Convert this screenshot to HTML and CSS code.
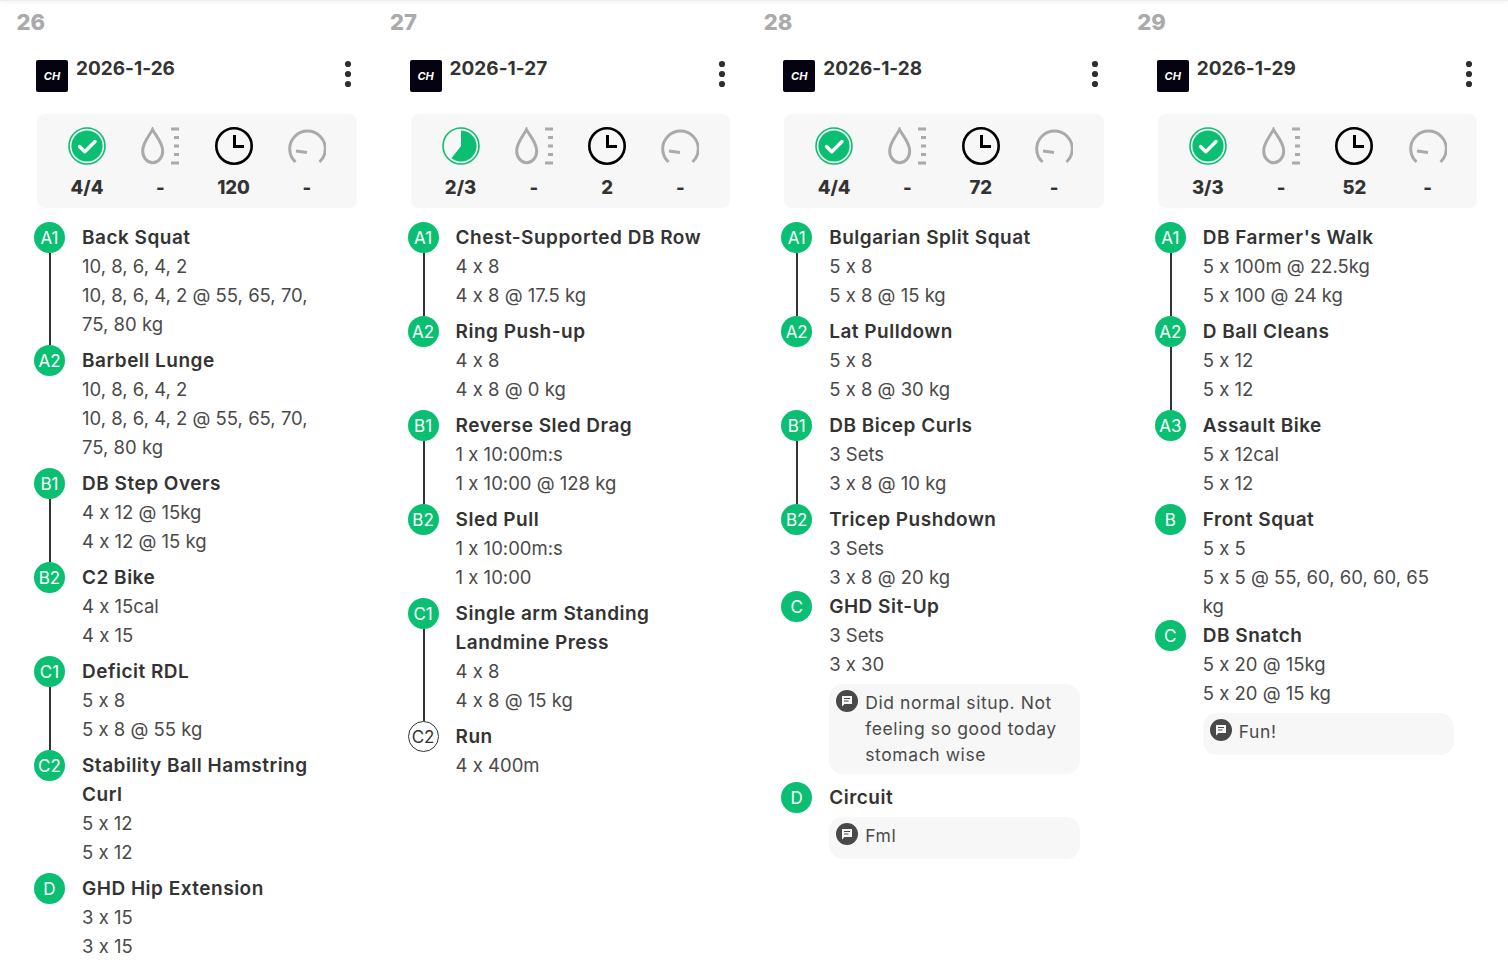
FILE: index.html
```html
<!DOCTYPE html>
<html lang="en">
<head>
<meta charset="utf-8">
<title>Training calendar</title>
<link rel="stylesheet" href="styles.css">
</head>
<body>
<svg class="defs" width="0" height="0" aria-hidden="true">
  <defs>
    <symbol id="i-check" viewBox="0 0 38 38">
      <circle cx="19" cy="19" r="18" fill="none" stroke="#0abf72" stroke-width="1.6"/>
      <circle cx="19" cy="19" r="15.6" fill="#0abf72"/>
      <path d="M11.5 19.5l5.3 5.2L27 14.500" fill="none" stroke="#fff" stroke-width="3.4" stroke-linecap="round" stroke-linejoin="round"/>
    </symbol>
    <symbol id="i-pie" viewBox="0 0 38 38">
      <circle cx="19" cy="19" r="18" fill="none" stroke="#0abf72" stroke-width="1.6"/>
      <path d="M19 3.400A15.600 15.600 0 1 1 9.400 31.300L19 19Z" fill="#0abf72"/>
    </symbol>
    <symbol id="i-drop" viewBox="0 0 38 38">
      <path d="M11.500 2.500C9 8 1.700 15 1.700 24a10 11.800 0 0 0 20 0C21.700 15 14 8 11.500 2.500Z" fill="none" stroke="#aaa" stroke-width="3"/>
      <path d="M30 2h8M33 10.500h5M33 19h5M33 27.500h5M30 36h8" stroke="#aaa" stroke-width="3"/>
    </symbol>
    <symbol id="i-clock" viewBox="0 0 38 38">
      <circle cx="19" cy="19" r="17.700" fill="none" stroke="#000" stroke-width="2.600"/>
      <path d="M19.500 8V19.500H29" fill="none" stroke="#000" stroke-width="3"/>
    </symbol>
    <symbol id="i-gauge" viewBox="0 0 38 38">
      <path d="M7.500 35A17.800 17.800 0 1 1 31.500 35" fill="none" stroke="#aaa" stroke-width="3"/>
      <path d="M8 24l11 1.500" fill="none" stroke="#aaa" stroke-width="3"/>
    </symbol>
    <symbol id="i-note" viewBox="0 0 22 22">
      <circle cx="11" cy="11" r="11" fill="#494949"/>
      <path d="M6 6h10v8h-7.500L6 16.500Z" fill="#f7f7f7"/>
      <path d="M8 8.500h6M8 11h4.500" stroke="#494949" stroke-width="1.200"/>
    </symbol>
    <symbol id="i-more" viewBox="0 0 8 28">
      <circle cx="4" cy="4" r="3.100" fill="#2f2f33"/>
      <circle cx="4" cy="14" r="3.100" fill="#2f2f33"/>
      <circle cx="4" cy="24" r="3.100" fill="#2f2f33"/>
    </symbol>
  </defs>
</svg>
<div class="topbar"></div>
<main class="week">

  <section class="day">
    <div class="daynum">26</div>
    <header class="head">
      <span class="logo">CH</span>
      <h2 class="date">2026-1-26</h2>
      <svg class="more"><use href="#i-more"/></svg>
    </header>
    <div class="stats">
      <div class="stat"><svg class="ico"><use href="#i-check"/></svg><b>4/4</b></div>
      <div class="stat"><svg class="ico"><use href="#i-drop"/></svg><b>-</b></div>
      <div class="stat"><svg class="ico"><use href="#i-clock"/></svg><b>120</b></div>
      <div class="stat"><svg class="ico"><use href="#i-gauge"/></svg><b>-</b></div>
    </div>
    <div class="list">
      <div class="row"><div class="rail"><span class="badge">A1</span><span class="line"></span></div><div class="body"><h3>Back Squat</h3><p>10, 8, 6, 4, 2</p><p>10, 8, 6, 4, 2 @ 55, 65, 70, 75, 80 kg</p></div></div>
      <div class="row"><div class="rail"><span class="badge">A2</span></div><div class="body"><h3>Barbell Lunge</h3><p>10, 8, 6, 4, 2</p><p>10, 8, 6, 4, 2 @ 55, 65, 70, 75, 80 kg</p></div></div>
      <div class="row"><div class="rail"><span class="badge">B1</span><span class="line"></span></div><div class="body"><h3>DB Step Overs</h3><p>4 x 12 @ 15kg</p><p>4 x 12 @ 15 kg</p></div></div>
      <div class="row"><div class="rail"><span class="badge">B2</span></div><div class="body"><h3>C2 Bike</h3><p>4 x 15cal</p><p>4 x 15</p></div></div>
      <div class="row"><div class="rail"><span class="badge">C1</span><span class="line"></span></div><div class="body"><h3>Deficit RDL</h3><p>5 x 8</p><p>5 x 8 @ 55 kg</p></div></div>
      <div class="row"><div class="rail"><span class="badge">C2</span></div><div class="body"><h3>Stability Ball Hamstring Curl</h3><p>5 x 12</p><p>5 x 12</p></div></div>
      <div class="row"><div class="rail"><span class="badge">D</span></div><div class="body"><h3>GHD Hip Extension</h3><p>3 x 15</p><p>3 x 15</p></div></div>
    </div>
  </section>

  <section class="day">
    <div class="daynum">27</div>
    <header class="head">
      <span class="logo">CH</span>
      <h2 class="date">2026-1-27</h2>
      <svg class="more"><use href="#i-more"/></svg>
    </header>
    <div class="stats">
      <div class="stat"><svg class="ico"><use href="#i-pie"/></svg><b>2/3</b></div>
      <div class="stat"><svg class="ico"><use href="#i-drop"/></svg><b>-</b></div>
      <div class="stat"><svg class="ico"><use href="#i-clock"/></svg><b>2</b></div>
      <div class="stat"><svg class="ico"><use href="#i-gauge"/></svg><b>-</b></div>
    </div>
    <div class="list">
      <div class="row"><div class="rail"><span class="badge">A1</span><span class="line"></span></div><div class="body"><h3>Chest-Supported DB Row</h3><p>4 x 8</p><p>4 x 8 @ 17.5 kg</p></div></div>
      <div class="row"><div class="rail"><span class="badge">A2</span></div><div class="body"><h3>Ring Push-up</h3><p>4 x 8</p><p>4 x 8 @ 0 kg</p></div></div>
      <div class="row"><div class="rail"><span class="badge">B1</span><span class="line"></span></div><div class="body"><h3>Reverse Sled Drag</h3><p>1 x 10:00m:s</p><p>1 x 10:00 @ 128 kg</p></div></div>
      <div class="row"><div class="rail"><span class="badge">B2</span></div><div class="body"><h3>Sled Pull</h3><p>1 x 10:00m:s</p><p>1 x 10:00</p></div></div>
      <div class="row"><div class="rail"><span class="badge">C1</span><span class="line"></span></div><div class="body"><h3>Single arm Standing Landmine Press</h3><p>4 x 8</p><p>4 x 8 @ 15 kg</p></div></div>
      <div class="row"><div class="rail"><span class="badge badge-open">C2</span></div><div class="body"><h3>Run</h3><p>4 x 400m</p></div></div>
    </div>
  </section>

  <section class="day">
    <div class="daynum">28</div>
    <header class="head">
      <span class="logo">CH</span>
      <h2 class="date">2026-1-28</h2>
      <svg class="more"><use href="#i-more"/></svg>
    </header>
    <div class="stats">
      <div class="stat"><svg class="ico"><use href="#i-check"/></svg><b>4/4</b></div>
      <div class="stat"><svg class="ico"><use href="#i-drop"/></svg><b>-</b></div>
      <div class="stat"><svg class="ico"><use href="#i-clock"/></svg><b>72</b></div>
      <div class="stat"><svg class="ico"><use href="#i-gauge"/></svg><b>-</b></div>
    </div>
    <div class="list">
      <div class="row"><div class="rail"><span class="badge">A1</span><span class="line"></span></div><div class="body"><h3>Bulgarian Split Squat</h3><p>5 x 8</p><p>5 x 8 @ 15 kg</p></div></div>
      <div class="row"><div class="rail"><span class="badge">A2</span></div><div class="body"><h3>Lat Pulldown</h3><p>5 x 8</p><p>5 x 8 @ 30 kg</p></div></div>
      <div class="row"><div class="rail"><span class="badge">B1</span><span class="line"></span></div><div class="body"><h3>DB Bicep Curls</h3><p>3 Sets</p><p>3 x 8 @ 10 kg</p></div></div>
      <div class="row row-tight"><div class="rail"><span class="badge">B2</span></div><div class="body"><h3>Tricep Pushdown</h3><p>3 Sets</p><p>3 x 8 @ 20 kg</p></div></div>
      <div class="row row-note"><div class="rail"><span class="badge">C</span></div><div class="body"><h3>GHD Sit-Up</h3><p>3 Sets</p><p>3 x 30</p><div class="note"><svg class="note-ico"><use href="#i-note"/></svg><span>Did normal situp. Not feeling so good today stomach wise</span></div></div></div>
      <div class="row row-note"><div class="rail"><span class="badge">D</span></div><div class="body"><h3>Circuit</h3><div class="note"><svg class="note-ico"><use href="#i-note"/></svg><span>Fml</span></div></div></div>
    </div>
  </section>

  <section class="day">
    <div class="daynum">29</div>
    <header class="head">
      <span class="logo">CH</span>
      <h2 class="date">2026-1-29</h2>
      <svg class="more"><use href="#i-more"/></svg>
    </header>
    <div class="stats">
      <div class="stat"><svg class="ico"><use href="#i-check"/></svg><b>3/3</b></div>
      <div class="stat"><svg class="ico"><use href="#i-drop"/></svg><b>-</b></div>
      <div class="stat"><svg class="ico"><use href="#i-clock"/></svg><b>52</b></div>
      <div class="stat"><svg class="ico"><use href="#i-gauge"/></svg><b>-</b></div>
    </div>
    <div class="list">
      <div class="row"><div class="rail"><span class="badge">A1</span><span class="line"></span></div><div class="body"><h3>DB Farmer's Walk</h3><p>5 x 100m @ 22.5kg</p><p>5 x 100 @ 24 kg</p></div></div>
      <div class="row"><div class="rail"><span class="badge">A2</span><span class="line"></span></div><div class="body"><h3>D Ball Cleans</h3><p>5 x 12</p><p>5 x 12</p></div></div>
      <div class="row"><div class="rail"><span class="badge">A3</span></div><div class="body"><h3>Assault Bike</h3><p>5 x 12cal</p><p>5 x 12</p></div></div>
      <div class="row row-tight"><div class="rail"><span class="badge">B</span></div><div class="body"><h3>Front Squat</h3><p>5 x 5</p><p>5 x 5 @ 55, 60, 60, 60, 65 kg</p></div></div>
      <div class="row row-note"><div class="rail"><span class="badge">C</span></div><div class="body"><h3>DB Snatch</h3><p>5 x 20 @ 15kg</p><p>5 x 20 @ 15 kg</p><div class="note"><svg class="note-ico"><use href="#i-note"/></svg><span>Fun!</span></div></div></div>
    </div>
  </section>

</main>
</body>
</html>
```
FILE: styles.css
```css
* { box-sizing: border-box; }
html, body { margin: 0; height: 100%; overflow: hidden; background: #fff; }
body { font-family: Inter, "Noto Sans", sans-serif; font-feature-settings: "calt" 0; color: #333; }
.defs { position: absolute; }
.topbar { height: 1px; background: #eee; box-shadow: 0 0 5px rgba(0,0,0,.22); }
.week { display: grid; grid-template-columns: repeat(4, 373.6px); }
.day { padding: 9px 0 0 34px; min-width: 0; }
.daynum { margin-left: -17.5px; font-size: 22px; font-weight: 800; line-height: 24px; color: #aaa; }
.head { display: flex; align-items: flex-start; margin: 26px 0 0 2px; width: 320px; height: 54px; }
.logo { width: 32px; height: 32px; border-radius: 2px; background: #04030f; color: #fff; font-size: 11px; font-weight: 700; font-style: italic; display: flex; align-items: center; justify-content: center; }
.date { margin: -3px 0 0 8px; flex: 1; font-size: 19px; font-weight: 700; line-height: 24px; color: #333; }
.more { width: 8px; height: 28px; margin: 0 4px 0 0; }
.stats { display: grid; grid-template-columns: repeat(4, 73.3px); margin-left: 3px; width: 319.5px; height: 94px; padding: 13px 13.3px 0; border-radius: 8px; background: #f7f7f7; }
.stat { display: flex; flex-direction: column; align-items: center; }
.ico { width: 38px; height: 38px; overflow: visible; }
.stat b { margin-top: 9px; font-size: 18.500px; font-weight: 800; line-height: 26px; color: #333; }
.list { margin-top: 14px; }
.row { display: flex; gap: 17px; padding-bottom: 6px; }
.row-tight { padding-bottom: 0; margin-bottom: -1px; }
.row-note { padding-bottom: 8px; }
.rail { width: 31px; flex: none; display: flex; flex-direction: column; align-items: center; }
.badge { width: 31px; height: 31px; flex: none; border-radius: 50%; background: #0abf72; color: #fff; font-size: 17px; display: flex; align-items: center; justify-content: center; }
.badge-open { background: #fff; color: #333; border: 1px solid #333; }
.line { flex: 1; width: 2px; background: #333; margin: 0 0 -6px 1px; }
.body { width: 251px; min-width: 0; padding-top: 1px; }
.body h3 { margin: 0; font-size: 19px; font-weight: 600; letter-spacing: .5px; line-height: 29px; color: #333; }
.body p { margin: 0; font-size: 18.500px; line-height: 29px; color: #4a4a4a; }
.note { display: flex; gap: 7px; min-height: 42px; margin-top: 5px; padding: 6px 7px; border-radius: 14px; background: #f7f7f7; font-size: 17.500px; letter-spacing: .6px; line-height: 26px; color: #4a4a4a; }
.note-ico { width: 22px; height: 22px; flex: none; }
```
